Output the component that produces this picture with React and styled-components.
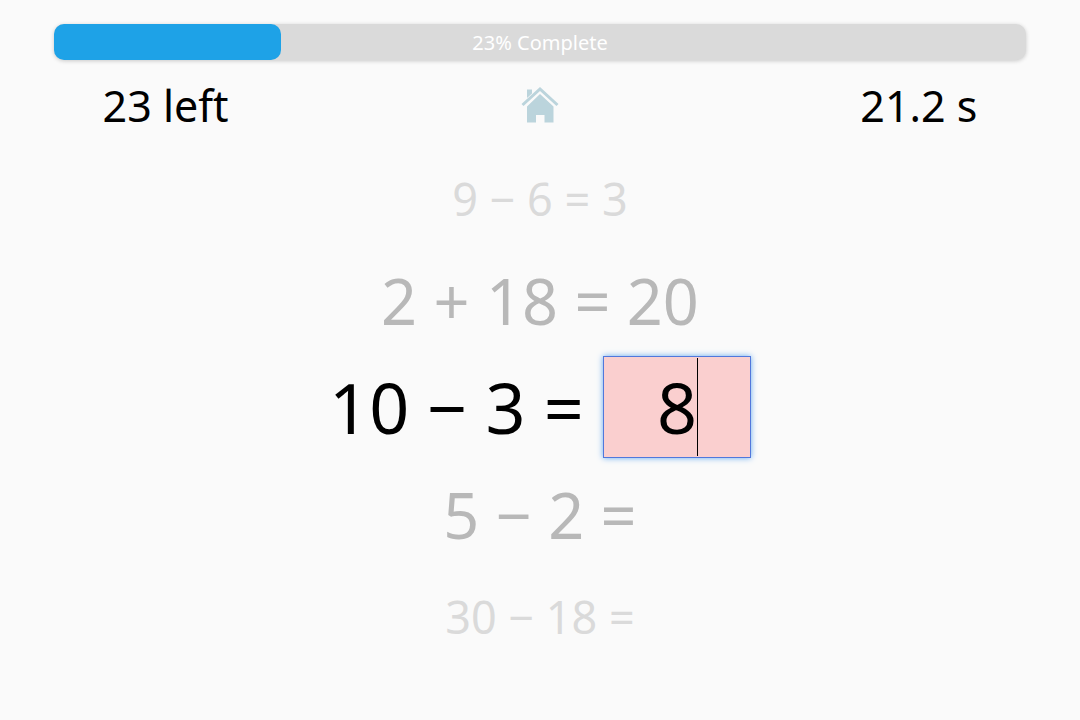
import React, { useState } from "react";
import styled, { createGlobalStyle } from "styled-components";

const Global = createGlobalStyle`
  *, *::before, *::after { box-sizing: border-box; }
  body {
    margin: 0;
    background: #fafafa;
    color: #000;
    font-family: "Noto Sans", "Open Sans", sans-serif;
  }
`;

const Page = styled.main`
  width: 90%;
  margin: 0 auto;
  padding-top: 24px;
`;

const Progress = styled.div`
  position: relative;
  height: 36px;
  border-radius: 10px;
  background: #dadada;
  box-shadow: 0 1px 4px rgba(0, 0, 0, 0.2);
`;

const Fill = styled.div`
  height: 100%;
  border-radius: 10px;
  background: #1ea2e7;
`;

const ProgressLabel = styled.span`
  position: absolute;
  inset: 0;
  display: flex;
  align-items: center;
  justify-content: center;
  color: #fff;
  font-size: 20px;
`;

const Status = styled.header`
  display: grid;
  grid-template-columns: 1fr auto 1fr;
  align-items: center;
  height: 90px;
  padding: 0 5%;
  font-size: 43px;
`;

const Timer = styled.span`
  text-align: right;
`;

const HomeLink = styled.a`
  display: block;
  height: 40px;
  margin-bottom: 12px;
  color: #bbd4dc;
`;

const Problems = styled.section`
  display: flex;
  flex-direction: column;
  align-items: center;
`;

const levels = {
  far: { size: 45, color: "#dadada", height: 96 },
  near: { size: 63, color: "#b8b8b8", height: 108 },
  current: { size: 70, color: "#000", height: 106 },
};

const Problem = styled.div`
  display: flex;
  align-items: center;
  gap: 19px;
  height: ${({ $level }) => levels[$level].height}px;
  color: ${({ $level }) => levels[$level].color};
  font-size: ${({ $level }) => levels[$level].size}px;
  white-space: nowrap;
`;

const AnswerBox = styled.div`
  position: relative;
  width: 148px;
`;

const Answer = styled.input`
  display: block;
  width: 100%;
  height: 102px;
  padding: 1px;
  border: 1px solid #5078dc;
  border-radius: 0;
  outline: none;
  background: #facfcf;
  box-shadow: 0 0 6px #64aaf0;
  color: #000;
  font: inherit;
  text-align: center;
  caret-color: transparent;
`;

const Caret = styled.span`
  position: absolute;
  top: 2px;
  bottom: 2px;
  left: calc(50% + 20px);
  width: 1px;
  background: #000;
`;

function HomeIcon() {
  return (
    <svg width="40" height="40" viewBox="0 0 40 40" fill="currentColor" aria-hidden="true">
      <path d="M20 2 38.500 19 36.500 21 20 6 3.500 21 1.500 19Z" />
      <path d="M7 4.500H12V8.500L7 13Z" />
      <path d="M20 9 33.500 21.500V37.500H24.500V30H16V37.500H7V21.500Z" />
    </svg>
  );
}

export default function App() {
  const [answer, setAnswer] = useState("8");
  const percent = 23;
  return (
    <>
      <Global />
      <Page>
        <Progress role="progressbar" aria-label="Progress" aria-valuenow={percent}>
          <Fill style={{ width: `${(percent * 70) / 69}%` }} />
          <ProgressLabel>{percent}% Complete</ProgressLabel>
        </Progress>
        <Status>
          <span>23 left</span>
          <HomeLink href="#" aria-label="Home"><HomeIcon /></HomeLink>
          <Timer>21.2 s</Timer>
        </Status>
        <Problems>
          <Problem $level="far">9 − 6 = 3</Problem>
          <Problem $level="near">2 + 18 = 20</Problem>
          <Problem $level="current">
            <label htmlFor="answer">10 − 3 =</label>
            <AnswerBox>
              <Answer id="answer" inputMode="numeric" autoComplete="off" value={answer} onChange={(e) => setAnswer(e.target.value)} />
              <Caret />
            </AnswerBox>
          </Problem>
          <Problem $level="near">5 − 2 =</Problem>
          <Problem $level="far">30 − 18 =</Problem>
        </Problems>
      </Page>
    </>
  );
}
